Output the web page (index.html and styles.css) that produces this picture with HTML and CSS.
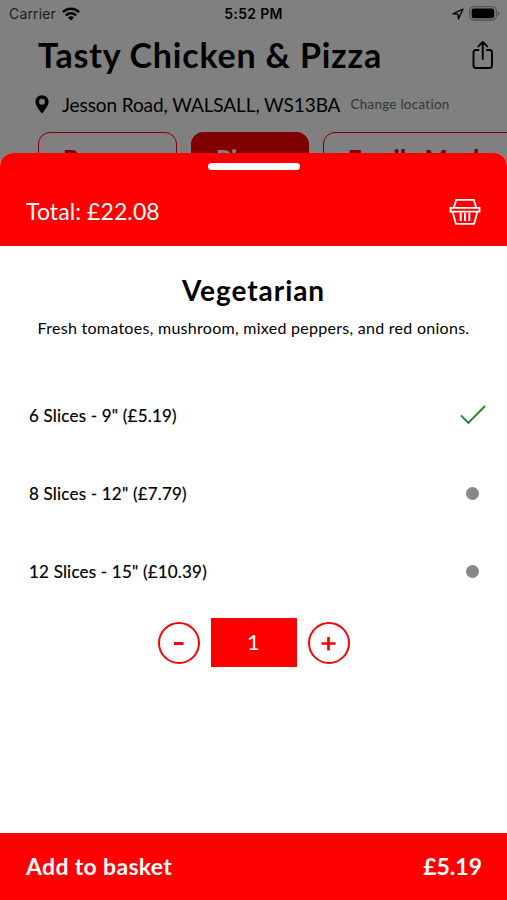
FILE: index.html
```html
<!DOCTYPE html>
<html lang="en">
<head>
<meta charset="utf-8">
<title>Tasty Chicken &amp; Pizza</title>
<link rel="stylesheet" href="styles.css">
</head>
<body>
<div class="screen">
  <div class="backdrop">
    <div class="status">
      <div class="carrier"><span class="carrier-name">Carrier</span>
        <svg class="wifi" viewBox="0 0 18 14" width="18" height="14"><g fill="none" stroke="#000" stroke-width="2.4"><path d="M.9 5.1a11.6 11.6 0 0 1 16.2 0"/><path d="M3.9 8.3a7.3 7.3 0 0 1 10.2 0"/></g><path d="M9 13.6 5.9 10.5a4.4 4.4 0 0 1 6.2 0z"/></svg>
      </div>
      <span class="time">5:52 PM</span>
      <div class="indicators">
        <svg viewBox="0 0 12 12" width="12" height="12"><path d="M1 5.9 11 1 6.4 11 6 6.1z" fill="none" stroke="#000" stroke-width="1.3" stroke-linejoin="round"/></svg>
        <svg viewBox="0 0 31 15" width="31" height="15"><rect x=".7" y=".7" width="26.6" height="13.4" rx="4" fill="none" stroke="#4d4d4d" stroke-width="1.1"/><rect x="2.6" y="2.6" width="22.6" height="9.6" rx="2.2"/><path d="M28.7 5v5q1.5-.8 1.5-2.500t-1.500-2.500z" fill="#4d4d4d"/></svg>
      </div>
    </div>
    <div class="heading">
      <h1 class="t-title">Tasty Chicken &amp; Pizza</h1>
      <svg viewBox="0 0 22 30" width="22" height="30" fill="none" stroke="#000" stroke-width="1.9" stroke-linecap="round" stroke-linejoin="round"><path d="M6.500 10H4q-2.500 0-2.500 2.500v13q0 2.500 2.500 2.500h13.500q2.500 0 2.500-2.500v-13q0-2.500-2.500-2.500H15M10.750 19V2M6.300 6.400l4.450-4.500 4.450 4.500"/></svg>
    </div>
    <div class="location">
      <svg viewBox="0 0 14 19" width="14" height="19"><path fill-rule="evenodd" d="M7 .3C3.300.3.400 3.200.400 6.800.400 11.500 7 18.500 7 18.500s6.600-7 6.600-11.700C13.600 3.200 10.700.3 7 .3zM7 3.700a3 3 0 1 1 0 6 3 3 0 0 1 0-6z"/></svg>
      <span class="address">Jesson Road, WALSALL, WS13BA</span>
      <span class="change">Change location</span>
    </div>
    <div class="tabs">
      <div class="tab tab-burgers">Burgers</div>
      <div class="tab tab-pizzas">Pizzas</div>
      <div class="tab tab-family">Family Meals</div>
    </div>
  </div>
  <div class="sheet">
    <div class="summary">
      <div class="grabber"></div>
      <div class="summary-row">
        <span class="total">Total: £22.08</span>
        <svg viewBox="0 0 32 28" width="32" height="28" fill="none" stroke="#fff" stroke-width="1.8"><path d="M4.800 9.500 7.200 1.900h17.600l2.400 7.600M1.500 9.900h29v3.700h-2l-3.400 12.200H6.900L3.500 13.600h-2zM3.500 13.600h25"/><path d="M11.700 15v8M16 15v8M20.300 15v8" stroke-width="2"/></svg>
      </div>
    </div>
    <h2 class="dish">Vegetarian</h2>
    <p class="desc"><span class="desc-text">Fresh tomatoes, mushroom, mixed peppers, and red onions.</span></p>
    <div class="options">
      <div class="option"><span class="label">6 Slices - 9" (£5.19)</span><svg class="check" viewBox="0 0 26 20" width="26" height="20"><path d="M1 10.300 8.300 17.800 25 1" fill="none" stroke="#188a2b" stroke-width="1.9"/></svg></div>
      <div class="option"><span class="label">8 Slices - 12" (£7.79)</span><i class="dot"></i></div>
      <div class="option"><span class="label">12 Slices - 15" (£10.39)</span><i class="dot"></i></div>
    </div>
    <div class="stepper">
      <div class="round"><svg viewBox="0 0 16 16" width="16" height="16"><path d="M3 8.500h9.500" stroke="#f00" stroke-width="3"/></svg></div>
      <div class="count">1</div>
      <div class="round"><svg viewBox="0 0 16 16" width="16" height="16"><path d="M.5 8.500h14M7.500 2v13.500" stroke="#f00" stroke-width="2.700"/></svg></div>
    </div>
    <div class="footer"><span class="add">Add to basket</span><span class="price">£5.19</span></div>
  </div>
</div>
</body>
</html>
```
FILE: styles.css
```css
* { box-sizing: border-box; }
body { margin: 0; font-family: Lato, "Liberation Sans", sans-serif; color: #000; }
h1, h2, p { margin: 0; }
svg { display: block; flex: none; }
.screen { position: relative; width: 507px; height: 900px; overflow: hidden; background: #808080; white-space: nowrap; }
.status { display: grid; grid-template-columns: 1fr auto 1fr; align-items: center; height: 27px; padding: 0 7px 0 7px; font-family: Inter, sans-serif; font-size: 14px; }
.carrier { display: flex; align-items: center; gap: 6px; padding-left: 2px; color: #1c1c1c; letter-spacing: .15px; }
.time { font-weight: 600; letter-spacing: .3px; }
.indicators { display: flex; align-items: center; justify-content: flex-end; gap: 4px; }
.indicators svg:first-child { margin-right: 1px; }
.heading { display: flex; align-items: center; justify-content: space-between; height: 56px; padding: 0 13px 0 38px; }
.t-title { font-size: 34px; font-weight: 700; line-height: 56px; letter-spacing: .79px; }
.location { display: flex; align-items: center; height: 42px; padding-left: 35px; }
.address { margin-left: 13px; font-size: 19px; letter-spacing: -.1px; }
.change { margin-left: 10px; font-size: 13.500px; letter-spacing: .25px; color: #30383a; }
.tabs { display: flex; gap: 15px; margin-top: 7px; padding-left: 38px; }
.tab { flex: none; height: 52px; padding: 12px 0 0 24px; border: 1.500px solid #800000; border-radius: 12px; color: #800000; font-size: 24px; font-weight: 900; line-height: 28px; }
.tab-burgers { width: 139px; }
.tab-pizzas { width: 118px; margin-left: -1px; background: #800000; color: #808080; }
.tab-family { width: 220px; margin-left: -1px; letter-spacing: .3px; }
.sheet { position: absolute; top: 153px; left: 0; width: 100%; height: 747px; display: flex; flex-direction: column; background: #fff; border-radius: 13px 13px 0 0; overflow: hidden; }
.summary { height: 93px; padding: 10px 26px 0; background: #f00; color: #fff; }
.grabber { width: 92px; height: 7px; margin: 0 auto; border-radius: 4px; background: #fff; }
.summary-row { display: flex; align-items: center; justify-content: space-between; height: 84px; }
.total { padding-bottom: 2px; font-size: 23px; letter-spacing: .1px; }
.dish { margin-top: 24px; font-size: 28px; line-height: 40px; font-weight: 700; letter-spacing: .95px; text-align: center; }
.desc { display: flex; justify-content: center; margin-top: 1px; font-size: 16px; line-height: 34px; letter-spacing: .28px; }
.options { margin-top: 31px; }
.option { display: flex; align-items: center; justify-content: space-between; height: 78px; padding: 0 21px 0 29px; font-size: 17px; letter-spacing: .19px; -webkit-text-stroke: .2px #000; }
.dot { width: 13px; height: 13px; margin-right: 7px; border-radius: 50%; background: #888; }
.stepper { display: flex; align-items: center; justify-content: center; gap: 11px; height: 49px; margin-top: 8px; }
.round { display: grid; place-items: center; width: 42px; height: 42px; border: 2px solid #f00; border-radius: 50%; }
.count { width: 86px; height: 49px; background: #f00; color: #fff; font-size: 22px; line-height: 48px; text-align: center; }
.footer { display: flex; align-items: center; justify-content: space-between; height: 67px; margin-top: auto; padding: 0 25px 2px 26px; background: #f00; color: #fff; font-size: 23px; font-weight: 700; }
.add { letter-spacing: .33px; }
```
